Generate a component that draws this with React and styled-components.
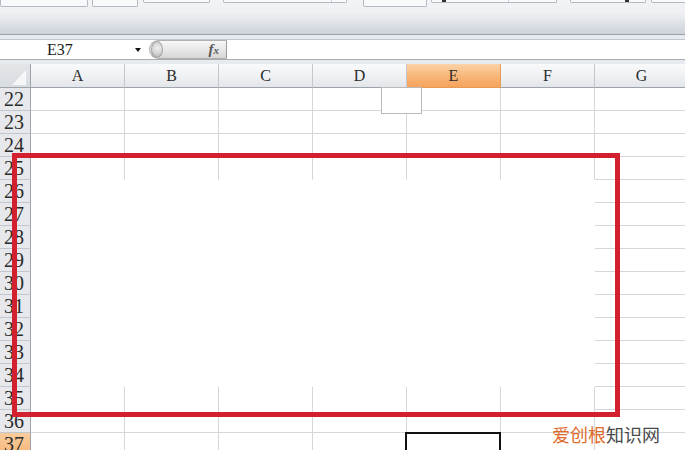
import React from "react";
import styled, { createGlobalStyle } from "styled-components";

const GlobalStyle = createGlobalStyle`
  html, body {
    margin: 0;
    padding: 0;
    background: #ffffff;
  }
  * {
    box-sizing: border-box;
  }
`;

const COLUMNS = ["A", "B", "C", "D", "E", "F", "G"];
const ROWS = Array.from({ length: 16 }, (_, i) => 22 + i);

// ribbon buttons peeking out at the very top
const RIBBON_BOXES = [
  { gap: 0, width: 88, height: 7 },
  { gap: 4, width: 46, height: 7 },
  { gap: 5, width: 67, height: 3 },
  { gap: 13, width: 124, height: 3, divider: 107 },
  { gap: 16, width: 64, height: 7 },
  { gap: 4, width: 126, height: 3, mark: 10, divider: 76 },
  { gap: 13, width: 76, height: 3, mark: 54 },
  { gap: 5, width: 60, height: 3 },
];

const App = () => {
  return (
    <>
      <GlobalStyle />
      <Window>
        <Ribbon>
          <RibbonButtons>
            {RIBBON_BOXES.map((box, i) => (
              <RibbonBox
                key={i}
                $gap={box.gap}
                $width={box.width}
                $height={box.height}
              >
                {box.divider && <BoxDivider $left={box.divider} />}
                {box.mark && <BoxMark $left={box.mark} />}
              </RibbonBox>
            ))}
          </RibbonButtons>
        </Ribbon>

        <FormulaArea>
          <FormulaBar>
            <NameBox>
              <NameText>E37</NameText>
              <DropArrow />
            </NameBox>
            <FxWidget>
              <Knob />
              <FxLabel>
                f<small>x</small>
              </FxLabel>
            </FxWidget>
            <FormulaInput />
          </FormulaBar>
        </FormulaArea>

        <Sheet>
          <Corner>
            <svg width="31" height="24" viewBox="0 0 31 24">
              <polygon points="26,6 26,21 12,21" fill="#f6f7f8" />
            </svg>
          </Corner>
          {COLUMNS.map((col) => (
            <ColHeader key={col} $active={col === "E"}>
              {col}
            </ColHeader>
          ))}

          {ROWS.map((row) => (
            <React.Fragment key={row}>
              <RowHeader $active={row === 37}>{row}</RowHeader>
              {COLUMNS.map((col, ci) => {
                const inPaste = ci < 6 && row >= 25 && row <= 35;
                const hideRight = ci < 6 && row >= 26 && row <= 34;
                return (
                  <Cell
                    key={col}
                    $noBottom={inPaste}
                    $noRight={hideRight}
                    $selected={row === 37 && col === "E"}
                  />
                );
              })}
            </React.Fragment>
          ))}

          <FloatBox />
          <Highlight />
          <Watermark>
            <Orange>爱创根</Orange>知识网
          </Watermark>
        </Sheet>
      </Window>
    </>
  );
};

const Window = styled.div`
  width: 685px;
  height: 450px;
  overflow: hidden;
  display: flex;
  flex-direction: column;
  background: #ffffff;
`;

const Ribbon = styled.div`
  height: 34px;
  flex-shrink: 0;
  background: linear-gradient(
    #f1f3f5 0%,
    #eef0f3 38%,
    #dde1e7 70%,
    #cdd3dc 100%
  );
`;

const RibbonButtons = styled.div`
  display: flex;
  align-items: flex-start;
  white-space: nowrap;
`;

const RibbonBox = styled.div`
  position: relative;
  flex-shrink: 0;
  margin-left: ${(p) => p.$gap}px;
  width: ${(p) => p.$width}px;
  height: ${(p) => p.$height}px;
  background: #f8f9fa;
  border: 1px solid #b4bac3;
  border-top: none;
  border-radius: 0 0 2px 2px;
`;

const BoxDivider = styled.span`
  position: absolute;
  left: ${(p) => p.$left}px;
  top: 0;
  bottom: 0;
  width: 1px;
  background: #c8cdd4;
`;

const BoxMark = styled.span`
  position: absolute;
  left: ${(p) => p.$left}px;
  top: 0;
  width: 4px;
  height: 2px;
  background: #303030;
`;

const FormulaArea = styled.div`
  height: 30px;
  flex-shrink: 0;
  border-top: 1px solid #9ca1a8;
  background: #e7eaee;
  padding: 4px 0 4px;
`;

const FormulaBar = styled.div`
  height: 21px;
  display: flex;
  background: #ffffff;
  border-top: 1px solid #c2c6cc;
  border-bottom: 1px solid #a9adb3;
`;

const NameBox = styled.div`
  width: 149px;
  display: flex;
  align-items: center;
  padding-left: 47px;
  padding-right: 8px;
  justify-content: space-between;
`;

const NameText = styled.span`
  font-family: "Liberation Serif", "DejaVu Serif", serif;
  font-size: 16px;
  color: #1a1a1a;
  line-height: 1;
`;

const DropArrow = styled.span`
  width: 0;
  height: 0;
  border-left: 3px solid transparent;
  border-right: 3px solid transparent;
  border-top: 4px solid #111;
`;

const FxWidget = styled.div`
  width: 78px;
  display: flex;
  align-items: center;
  justify-content: space-between;
  padding-right: 7px;
  background: linear-gradient(#f7f7f7, #e6e6e6 55%, #d6d6d6);
  border: 1px solid #b0b0b0;
  border-radius: 10px 0 0 10px;
  border-right-color: #9a9a9a;
`;

const Knob = styled.span`
  width: 12px;
  height: 17px;
  margin-left: 1px;
  border-radius: 50%;
  background: radial-gradient(circle at 55% 40%, #f0f0f0 0%, #d2d2d2 55%, #a8a8a8 100%);
  border: 1px solid #a5a5a5;
`;

const FxLabel = styled.span`
  font-family: "Liberation Serif", "DejaVu Serif", serif;
  font-style: italic;
  font-weight: bold;
  font-size: 15px;
  line-height: 1;
  color: #5a5a5a;

  small {
    font-size: 11px;
  }
`;

const FormulaInput = styled.div`
  flex: 1;
  background: #ffffff;
`;

const Sheet = styled.div`
  position: relative;
  flex: 1;
  display: grid;
  grid-template-columns: 31px repeat(7, 94px);
  grid-template-rows: 24px;
  grid-auto-rows: 23px;
  background: #ffffff;
`;

const Corner = styled.div`
  background: linear-gradient(#e3e5e8, #d9dce0);
  border-right: 1px solid #9da3ab;
  border-bottom: 1px solid #9da3ab;

  svg {
    display: block;
  }
`;

const ColHeader = styled.div`
  display: flex;
  align-items: center;
  justify-content: center;
  font-family: "Liberation Serif", "DejaVu Serif", serif;
  font-size: 16px;
  color: #2b2b2b;
  background: ${(p) =>
    p.$active
      ? "linear-gradient(#fbd3a8, #f8b77a 50%, #f6a35c)"
      : "linear-gradient(#f9fafb, #eff1f3 50%, #e3e6ea)"};
  border-right: 1px solid ${(p) => (p.$active ? "#e59a55" : "#c4c8ce")};
  border-bottom: 1px solid ${(p) => (p.$active ? "#e59a55" : "#9da3ab")};
`;

const RowHeader = styled.div`
  display: flex;
  align-items: center;
  justify-content: center;
  padding-right: 2px;
  font-family: "Liberation Serif", "DejaVu Serif", serif;
  font-size: 20px;
  color: #2b2b2b;
  background: ${(p) =>
    p.$active ? "linear-gradient(#f9cd9c, #f5b679)" : "#e6e8eb"};
  border-right: 1px solid #9da3ab;
  border-bottom: 1px solid ${(p) => (p.$active ? "#e59a55" : "#c3c7cd")};
`;

const Cell = styled.div`
  position: relative;
  border-right: 1px solid ${(p) => (p.$noRight ? "transparent" : "#d6d6d6")};
  border-bottom: 1px solid ${(p) => (p.$noBottom ? "transparent" : "#d6d6d6")};

  ${(p) =>
    p.$selected &&
    `
    &::after {
      content: "";
      position: absolute;
      left: -2px;
      top: -1px;
      right: -1px;
      bottom: -1px;
      border: 2px solid #111;
    }
  `}
`;

const FloatBox = styled.div`
  position: absolute;
  left: 381px;
  top: 23px;
  width: 41px;
  height: 27px;
  background: #ffffff;
  border: 1px solid #b9b9b9;
`;

const Highlight = styled.div`
  position: absolute;
  left: 12px;
  top: 89px;
  width: 608px;
  height: 264px;
  border: 5px solid #d3202e;
  pointer-events: none;
`;

const Watermark = styled.div`
  position: absolute;
  left: 552px;
  top: 357px;
  font-family: "Noto Sans CJK SC", "Noto Sans", sans-serif;
  font-size: 18px;
  color: #4a4a4a;
  letter-spacing: 0;
  white-space: nowrap;
`;

const Orange = styled.span`
  color: #e06b2c;
`;

export default App;
